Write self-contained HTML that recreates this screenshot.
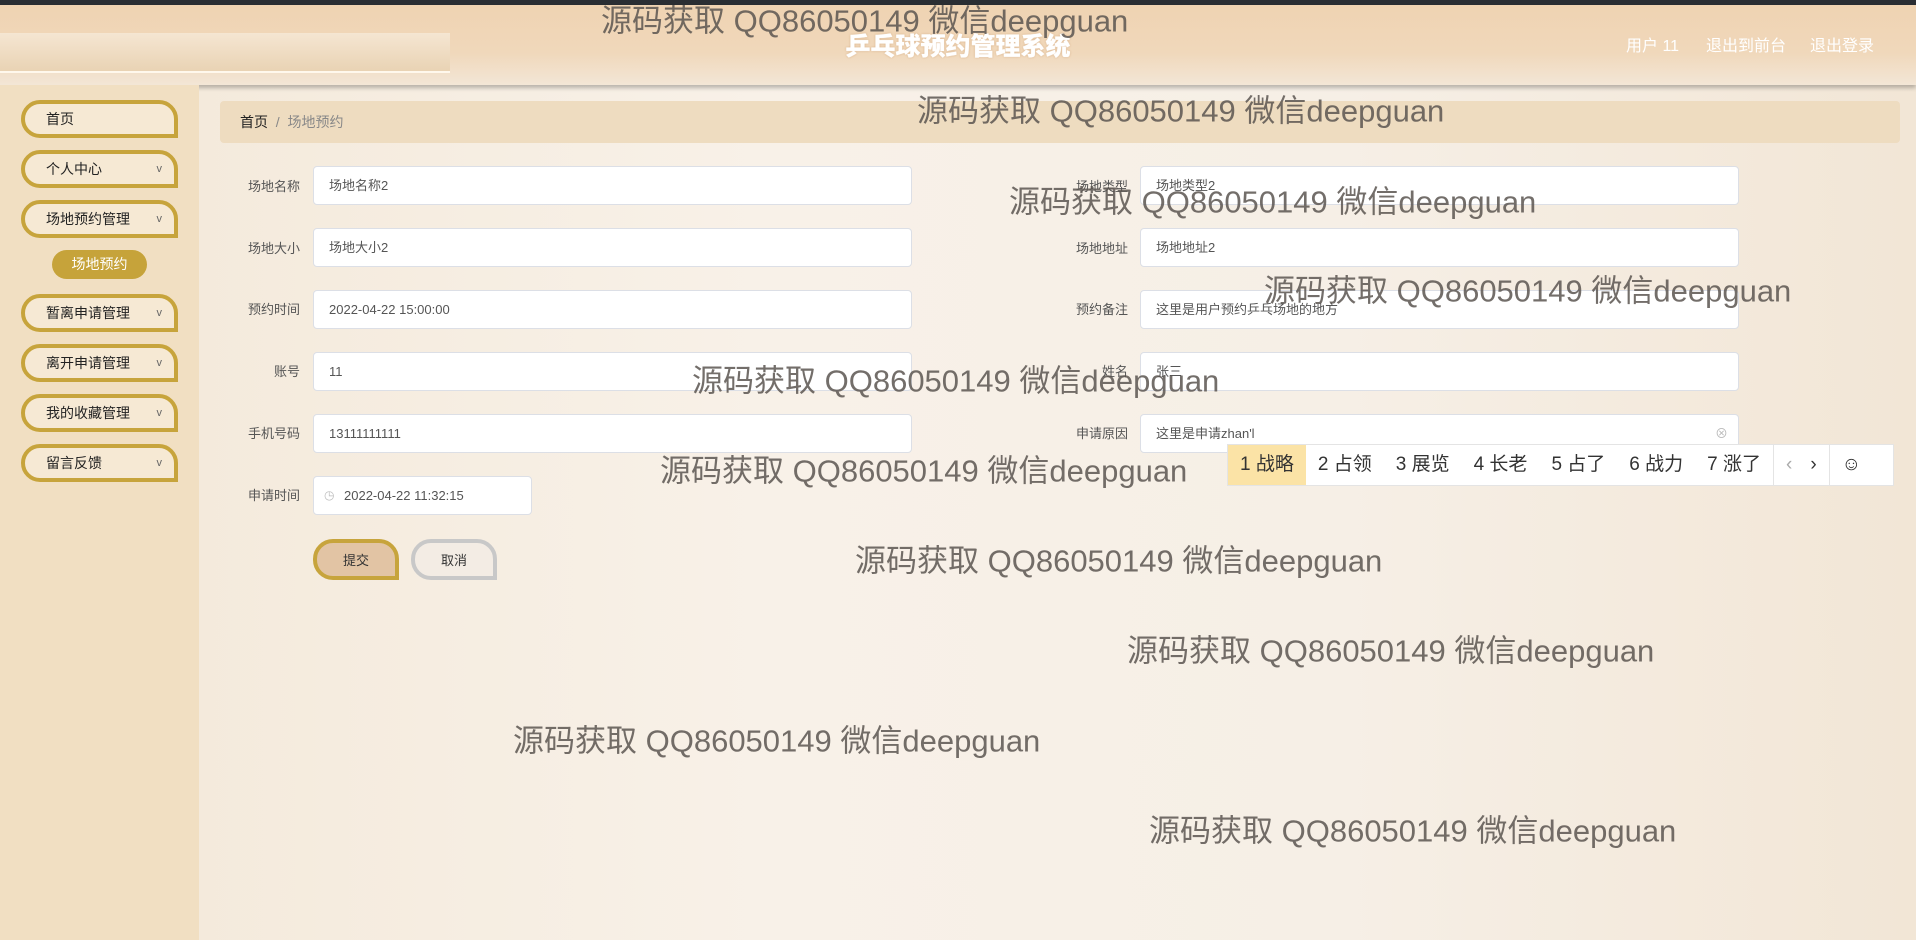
<!DOCTYPE html>
<html><head><meta charset="utf-8"><style>
*{margin:0;padding:0;box-sizing:border-box}
body{width:1916px;height:940px;overflow:hidden;position:relative;font-family:"Liberation Sans","Noto Sans CJK SC",sans-serif;background:linear-gradient(90deg,#f3e8d8 0%,#f8f1e8 40%,#f6efe6 70%,#f2e6d6 100%);}
.top{position:absolute;left:0;top:0;width:1916px;height:5px;background:#2a2e33}
.hdr{position:absolute;left:0;top:5px;width:1916px;height:80px;background:linear-gradient(180deg,#efd3b2 0%,#f0d8bb 60%,#f3e6d6 100%);box-shadow:0 3px 4px rgba(0,0,0,.25)}
.hdr .bar{position:absolute;left:0;top:28px;width:450px;height:40px;background:linear-gradient(180deg,#f5e6d2,#e9d3b4);border-bottom:2px solid #fff8ec}
.title{position:absolute;left:0;width:1916px;top:27px;text-align:center;color:#fff;font-weight:900;font-size:25px;text-shadow:0 0 1px #fff,0 0 2px #d0a070}
.hr{position:absolute;top:32px;font-size:16px;color:#fff}
.side{position:absolute;left:0;top:85px;width:199px;height:855px;background:#f1dfc2}
.mi{position:absolute;left:21px;width:157px;height:38px;border:4px solid #c7a43c;border-radius:19px 19px 0 19px;background:#f6e9d4;font-size:14px;color:#222;padding-left:21px;line-height:30px}
.mi .ar{position:absolute;right:12px;top:0;font-size:11px;color:#666;line-height:30px}
.sub{position:absolute;left:52px;top:250px;width:95px;height:29px;border-radius:15px;background:#c6a33a;color:#fff;font-size:14px;text-align:center;line-height:29px}
.bc{position:absolute;left:220px;top:101px;width:1680px;height:42px;background:#eedcc0;border-radius:4px;font-size:14px;line-height:42px;padding-left:20px;color:#333}
.bc span{color:#888}
.lb{position:absolute;font-size:13px;color:#555;text-align:right;width:100px}
.in{position:absolute;height:39px;background:#fff;border:1px solid #dcdfe6;border-radius:4px;font-size:13px;color:#555;line-height:37px;padding-left:15px}
.btn{position:absolute;top:539px;width:86px;height:41px;border-radius:20px 20px 0 20px;font-size:13px;text-align:center;line-height:35px;color:#333}
.wm{position:absolute;font-size:31px;color:rgba(90,85,80,.85);white-space:nowrap;line-height:1;transform:translateY(-50%)}
.ime{position:absolute;left:1227px;top:444px;width:667px;height:42px;background:#fff;border:1px solid #e4e4e4;font-size:19px;color:#333;display:flex}
.ime div{height:40px;line-height:40px;padding:0 0 0 12px}
</style></head><body>
<div class="top"></div>
<div class="hdr"><div class="bar"></div></div>
<div class="title">乒乓球预约管理系统</div>
<div class="hr" style="left:1626px">用户 11</div>
<div class="hr" style="left:1706px">退出到前台</div>
<div class="hr" style="left:1810px">退出登录</div>

<div class="side"></div>
<div class="mi" style="top:100px">首页</div>
<div class="mi" style="top:150px">个人中心<span class="ar">v</span></div>
<div class="mi" style="top:200px">场地预约管理<span class="ar">v</span></div>
<div class="sub">场地预约</div>
<div class="mi" style="top:294px">暂离申请管理<span class="ar">v</span></div>
<div class="mi" style="top:344px">离开申请管理<span class="ar">v</span></div>
<div class="mi" style="top:394px">我的收藏管理<span class="ar">v</span></div>
<div class="mi" style="top:444px">留言反馈<span class="ar">v</span></div>

<div class="bc"><b style="font-weight:normal;color:#222">首页</b> <span>&nbsp;/&nbsp; 场地预约</span></div>

<div class="lb" style="left:200px;top:176px">场地名称</div><div class="in" style="left:313px;top:166px;width:599px">场地名称2</div>
<div class="lb" style="left:200px;top:238px">场地大小</div><div class="in" style="left:313px;top:228px;width:599px">场地大小2</div>
<div class="lb" style="left:200px;top:299px">预约时间</div><div class="in" style="left:313px;top:290px;width:599px">2022-04-22 15:00:00</div>
<div class="lb" style="left:200px;top:361px">账号</div><div class="in" style="left:313px;top:352px;width:599px">11</div>
<div class="lb" style="left:200px;top:423px">手机号码</div><div class="in" style="left:313px;top:414px;width:599px">13111111111</div>
<div class="lb" style="left:200px;top:485px">申请时间</div><div class="in" style="left:313px;top:476px;width:219px;padding-left:30px"><span style="position:absolute;left:10px;color:#bbb;font-size:12px">◷</span>2022-04-22 11:32:15</div>

<div class="lb" style="left:1028px;top:176px">场地类型</div><div class="in" style="left:1140px;top:166px;width:599px">场地类型2</div>
<div class="lb" style="left:1028px;top:238px">场地地址</div><div class="in" style="left:1140px;top:228px;width:599px">场地地址2</div>
<div class="lb" style="left:1028px;top:299px">预约备注</div><div class="in" style="left:1140px;top:290px;width:599px">这里是用户预约乒乓场地的地方</div>
<div class="lb" style="left:1028px;top:361px">姓名</div><div class="in" style="left:1140px;top:352px;width:599px">张三</div>
<div class="lb" style="left:1028px;top:423px">申请原因</div><div class="in" style="left:1140px;top:414px;width:599px">这里是申请zhan'l<span style="position:absolute;right:10px;color:#bbb">⊗</span></div>

<div class="btn" style="left:313px;background:#e2c4a4;border:4px solid #c7a43c">提交</div>
<div class="btn" style="left:411px;background:#f3ece4;border:4px solid #c8c8c8">取消</div>

<div class="ime">
<div style="background:#fbe3a6;padding-right:12px">1 战略</div><div>2 占领</div><div style="padding-left:24px">3 展览</div><div style="padding-left:24px">4 长老</div><div style="padding-left:24px">5 占了</div><div style="padding-left:24px">6 战力</div><div style="padding-left:24px;padding-right:12px">7 涨了</div>
<div style="border-left:1px solid #e4e4e4;color:#aaa;padding:0 12px">‹</div><div style="padding:0 12px 0 6px">›</div><div style="border-left:1px solid #e4e4e4;padding:0 12px">☺</div>
</div>

<div class="wm" style="left:601px;top:21px">源码获取 QQ86050149 微信deepguan</div>
<div class="wm" style="left:917px;top:111px">源码获取 QQ86050149 微信deepguan</div>
<div class="wm" style="left:1009px;top:202px">源码获取 QQ86050149 微信deepguan</div>
<div class="wm" style="left:1264px;top:291px">源码获取 QQ86050149 微信deepguan</div>
<div class="wm" style="left:692px;top:381px">源码获取 QQ86050149 微信deepguan</div>
<div class="wm" style="left:660px;top:471px">源码获取 QQ86050149 微信deepguan</div>
<div class="wm" style="left:855px;top:561px">源码获取 QQ86050149 微信deepguan</div>
<div class="wm" style="left:1127px;top:651px">源码获取 QQ86050149 微信deepguan</div>
<div class="wm" style="left:513px;top:741px">源码获取 QQ86050149 微信deepguan</div>
<div class="wm" style="left:1149px;top:831px">源码获取 QQ86050149 微信deepguan</div>
</body></html>
